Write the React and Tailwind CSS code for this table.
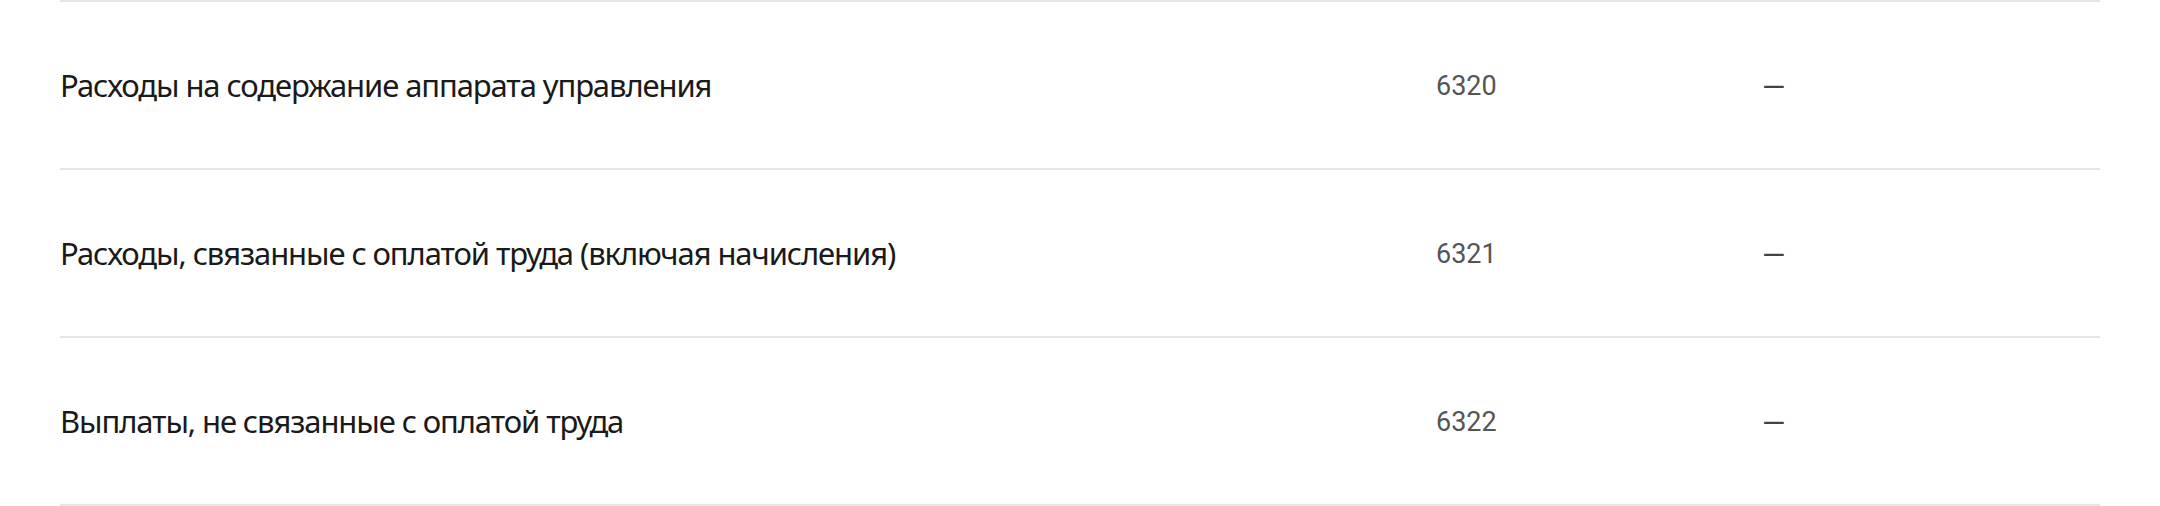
import React from 'react';

const rows = [
    { name: 'Расходы на содержание аппарата управления', code: '6320', value: '—' },
    { name: 'Расходы, связанные с оплатой труда (включая начисления)', code: '6321', value: '—' },
    { name: 'Выплаты, не связанные с оплатой труда', code: '6322', value: '—' },
];

const App = () => {
    return (
        <div className="w-full bg-white px-[60px]">
            <div className="border-b-2 border-[#e6e6e6]">
                {rows.map((row) => (
                    <div key={row.code} className="flex h-[168px] items-center border-t-2 border-[#e6e6e6]">
                        <div className="w-[1376px] shrink-0 font-['Noto_Sans',sans-serif] text-[31px] tracking-[-1.1px] text-[#1a1a1a]">
                            {row.name}
                        </div>
                        <div className="w-[326px] shrink-0 pt-[3px] font-['Roboto',sans-serif] text-[27px] text-[#555]">
                            {row.code}
                        </div>
                        <div className="pt-[3px] font-['Roboto',sans-serif] text-[30px] leading-[36px] text-[#444]">{row.value}</div>
                    </div>
                ))}
            </div>
        </div>
    );
};

export default App;
